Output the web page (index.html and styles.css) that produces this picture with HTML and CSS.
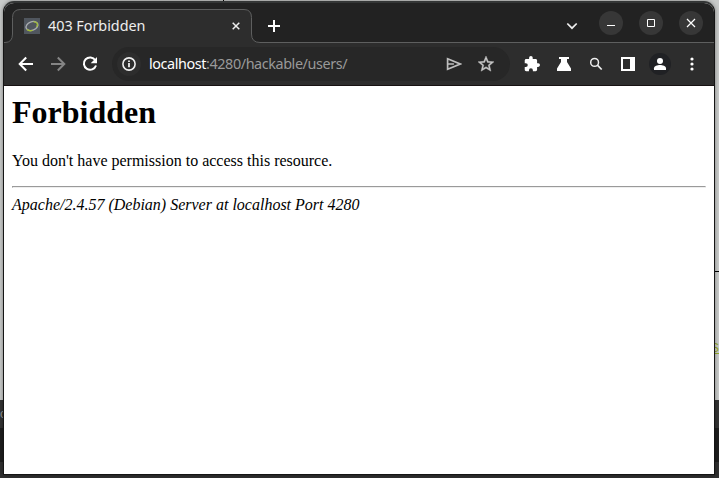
FILE: index.html
```html
<!DOCTYPE html>
<html lang="en">
<head>
<meta charset="utf-8">
<title>403 Forbidden</title>
<link rel="stylesheet" href="styles.css">
</head>
<body>
<div class="desktop" aria-hidden="true">
  <i class="mark mark-top"></i><i class="mark mark-line"></i>
  <span class="edge-left">o</span><span class="edge-right">S</span>
</div>
<div class="window">
  <header class="tabstrip">
    <svg class="tab-shape" width="710" height="40" viewBox="0 0 710 40">
      <path d="M0 39.5H1Q8.500 39.500 8.500 31V14.500Q8.500 6.500 16.500 6.500H240Q247.500 6.500 247.500 14.500V31Q247.500 39.500 256 39.500H710V41H0Z" fill="#2d2d2d"/>
      <path d="M0 39.500H1Q8.500 39.500 8.500 31V14.500Q8.500 6.500 16.500 6.500H240Q247.500 6.500 247.500 14.500V31Q247.500 39.500 256 39.500H710" fill="none" stroke="#5e5f5f"/>
    </svg>
    <div class="tab">
      <svg class="favicon" width="16" height="16" viewBox="0 0 16 16"><path fill="#50565e" d="M0 0h16v16H0z"/><g fill="none" transform="rotate(-22 8 8)"><ellipse cx="8" cy="8" rx="6.200" ry="4.200" stroke="#a9adb0" stroke-width="1.300"/><path d="M11 4.700c3.600 1.300 3.600 3.800 1 5.800M2 9.300c1 2 3 2.900 5 2.900" stroke="#a3bd35" stroke-width="1.300"/></g></svg>
      <span class="tab-title">403 Forbidden</span>
      <svg class="tab-close" width="8" height="8" viewBox="0 0 8 8"><path d="M.7.7l6.600 6.600M7.300.7L.7 7.300" stroke="#eee" stroke-width="1.500"/></svg>
    </div>
    <svg class="new-tab" width="12" height="12" viewBox="0 0 12 12"><path d="M6 0v12M0 6h12" stroke="#fff" stroke-width="2"/></svg>
    <svg class="tab-search" width="12" height="8" viewBox="0 0 12 8"><path d="M1.300 1.500L6 6.200l4.700-4.700" fill="none" stroke="#eee" stroke-width="1.700"/></svg>
    <div class="controls">
      <span class="control"><svg viewBox="0 0 24 24"><path d="M8 14.500h8" stroke="#fff"/></svg></span>
      <span class="control"><svg viewBox="0 0 24 24"><path d="M8.500 8.500h7v7h-7z" stroke="#fff"/></svg></span>
      <span class="control"><svg viewBox="0 0 24 24"><path d="M8 8l8 8m0-8l-8 8" stroke="#fff" stroke-width="1.200"/></svg></span>
    </div>
  </header>
  <nav class="toolbar">
    <svg class="icon back" viewBox="0 0 16 16"><path d="M15 8H2M8.200 1.500L1.700 8l6.500 6.500" fill="none" stroke="#fff" stroke-width="2"/></svg>
    <svg class="icon forward" viewBox="0 0 16 16"><path d="M1 8h13M7.800 1.500L14.300 8l-6.500 6.500" fill="none" stroke="#858585" stroke-width="2"/></svg>
    <svg class="icon reload" viewBox="0 0 16 16"><path d="M13.300 4.200A6.200 6.200 0 1 0 14 9.500" fill="none" stroke="#fff" stroke-width="2"/><path d="M15 1v6.300H8.700z" fill="#fff"/></svg>
    <div class="omnibox">
      <span class="site-info"><svg viewBox="0 0 14 14"><circle cx="7" cy="7" r="6.100" fill="none" stroke="#eee" stroke-width="1.600"/><path d="M6.100 6h1.800v4.300H6.100zM6.100 3.500h1.800V5H6.100z" fill="#eee"/></svg></span>
      <span class="url"><b>localhost</b>:4280/hackable/users/</span>
      <svg class="send" width="16" height="14" viewBox="0 0 16 14"><path d="M1.600 1.800L14.200 7 1.600 12.200zM1.600 7h6.300" fill="none" stroke="#bebebe" stroke-width="1.700"/></svg>
      <svg class="star" width="16" height="16" viewBox="2 2 20 20"><path fill="#c8c8c8" stroke="#c8c8c8" stroke-width=".5" d="m22 9.240-7.190-.62L12 2 9.190 8.630 2 9.240l5.460 4.730L5.820 21 12 17.270 18.180 21l-1.630-7.030L22 9.240zM12 15.400l-3.760 2.270 1-4.280-3.320-2.880 4.380-.38L12 6.100l1.710 4.040 4.380.38-3.320 2.880 1 4.280L12 15.400z"/></svg>
    </div>
    <svg class="icon puzzle" viewBox="1 1 22 22"><path fill="#fff" d="M20.500 11H19V7c0-1.100-.9-2-2-2h-4V3.500a2.500 2.500 0 0 0-5 0V5H4c-1.100 0-1.990.9-1.990 2v3.800H3.500a2.700 2.700 0 0 1 0 5.400H2V20c0 1.100.9 2 2 2h3.800v-1.500a2.700 2.700 0 0 1 5.400 0V22H17c1.100 0 2-.9 2-2v-4h1.500a2.500 2.500 0 0 0 0-5z"/></svg>
    <svg class="icon flask" viewBox="0 0 16 16"><path d="M3 1h10v2h-2v3l4 6.500V15H1v-2.500L5 6V3H3z" fill="#fff"/></svg>
    <svg class="icon search" viewBox="0 0 16 16"><circle cx="6.600" cy="6.400" r="3.900" fill="none" stroke="#eee" stroke-width="1.500"/><path d="M9.400 9.200l4.300 4.300" stroke="#eee" stroke-width="1.700"/></svg>
    <svg class="icon panel" viewBox="0 0 16 16"><path fill="#fff" fill-rule="evenodd" d="M1 1h14v14H1zM3 3v10h7V3z"/></svg>
    <span class="profile"><svg viewBox="0 0 14 14"><circle cx="7" cy="4" r="3" fill="#fff"/><path d="M1 13v-1.800C1 9.200 4.500 8 7 8s6 1.200 6 3.200V13z" fill="#fff"/></svg></span>
    <svg class="menu" width="4" height="14" viewBox="0 0 4 14"><g fill="#fff"><circle cx="2" cy="2" r="1.600"/><circle cx="2" cy="7" r="1.600"/><circle cx="2" cy="12" r="1.600"/></g></svg>
  </nav>
  <main class="page">
    <h1>Forbidden</h1>
    <p>You don't have permission to access this resource.</p>
    <hr>
    <address>Apache/2.4.57 (Debian) Server at localhost Port 4280</address>
  </main>
</div>
</body>
</html>
```
FILE: styles.css
```css
* { box-sizing: border-box; }
body { margin: 0; width: 719px; height: 478px; overflow: hidden; }
body { background: linear-gradient(#c9cbca 0 400px, #333 400px 428px, #1e1e1e 428px 462px, #303030 462px); }
svg { display: block; flex: none; }
.desktop { position: absolute; inset: 0; overflow: hidden; font: 12px "Liberation Sans", sans-serif; }
.mark { position: absolute; background: #000; }
.mark-top { left: 223px; top: 0; width: 1px; height: 2px; }
.mark-line { left: 715px; top: 271px; width: 4px; height: 1px; }
.edge-left { position: absolute; left: 0; top: 407px; color: #999; }
.edge-right { position: absolute; left: 711px; top: 341px; color: #98ad2b; text-decoration: underline; }
.window { position: relative; display: flex; flex-direction: column; width: 712px; height: 474px; margin: 1px 0 0 3px; border: 1px solid #151515; border-top: 2px solid #343636; border-radius: 11px 11px 0 0; overflow: hidden; background: #fff; box-shadow: 0 0 4px rgba(0,0,0,.4); }
.tabstrip { position: relative; display: flex; flex: none; height: 40px; background: #222; color: #eee; }
.tab-shape { position: absolute; left: 0; top: 0; }
.tab { position: relative; display: flex; align-items: center; width: 240px; height: 33px; margin: 6px 0 0 8px; padding: 0 12px 0 12px; }
.tab-title { margin-left: 8px; font: 14.400px "Noto Sans", sans-serif; letter-spacing: -.03px; white-space: nowrap; }
.tab-close { margin-left: auto; }
.new-tab { margin: 17px 0 0 16px; }
.tab-search { margin: 19px 0 0 286px; }
.controls { display: flex; gap: 16px; margin: 8px 0 0 21px; }
.control { width: 24px; height: 24px; border-radius: 50%; background: #373737; }
.control svg { width: 24px; height: 24px; fill: none; }
.toolbar { display: flex; align-items: center; flex: none; height: 43px; padding: 0 0 1px 14px; background: #2d2d2d; border-bottom: 1px solid #171112; }
.icon { width: 16px; height: 16px; }
.forward, .reload { margin-left: 16px; }
.omnibox { display: flex; align-items: center; width: 398px; height: 34px; margin-left: 14px; padding: 0 16px 0 5px; border-radius: 17px; background: #272727; }
.site-info { display: grid; place-items: center; width: 24px; height: 24px; border-radius: 50%; background: #2d2d2d; }
.site-info svg { width: 14px; height: 14px; }
.url { margin-left: 8px; font: 14.400px "Noto Sans", sans-serif; letter-spacing: -.42px; color: #999; white-space: nowrap; }
.url b { font-weight: 400; color: #fff; }
.send { margin-left: auto; }
.star { margin-left: 16px; }
.puzzle { margin-left: 14px; }
.flask, .search, .panel { margin-left: 16px; }
.profile { display: grid; place-items: center; width: 22px; height: 22px; margin-left: 13px; border-radius: 50%; background: #202124; }
.profile svg { width: 14px; height: 14px; }
.menu { margin-left: 19px; }
.page { padding: 8px; font: 16px "Liberation Serif", serif; color: #000; }
.page h1 { margin: 0 0 21px; font-size: 32px; line-height: 37px; }
.page p { margin: 16px 0; line-height: 18px; }
.page hr { margin: 8px 0; }
```
